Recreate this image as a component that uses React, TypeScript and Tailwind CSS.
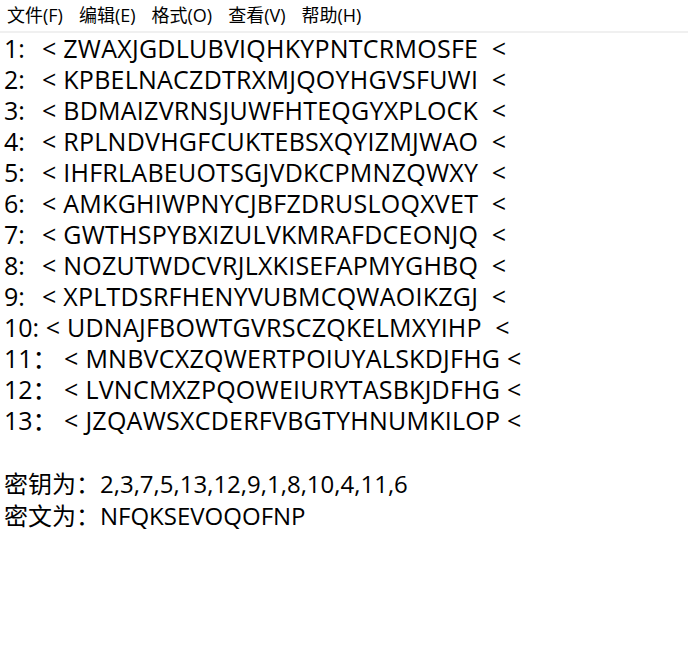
import React from 'react';

const menus = ['文件(F)', '编辑(E)', '格式(O)', '查看(V)', '帮助(H)'];

// [line prefix, rest of the line]
const rows: [string, string][] = [
  ['1:  ', '< ZWAXJGDLUBVIQHKYPNTCRMOSFE  <'],
  ['2:  ', '< KPBELNACZDTRXMJQOYHGVSFUWI  <'],
  ['3:  ', '< BDMAIZVRNSJUWFHTEQGYXPLOCK  <'],
  ['4:  ', '< RPLNDVHGFCUKTEBSXQYIZMJWAO  <'],
  ['5:  ', '< IHFRLABEUOTSGJVDKCPMNZQWXY  <'],
  ['6:  ', '< AMKGHIWPNYCJBFZDRUSLOQXVET  <'],
  ['7:  ', '< GWTHSPYBXIZULVKMRAFDCEONJQ  <'],
  ['8:  ', '< NOZUTWDCVRJLXKISEFAPMYGHBQ  <'],
  ['9:  ', '< XPLTDSRFHENYVUBMCQWAOIKZGJ  <'],
  ['10: ', '< UDNAJFBOWTGVRSCZQKELMXYIHP  <'],
  ['11： ', '< MNBVCXZQWERTPOIUYALSKDJFHG <'],
  ['12： ', '< LVNCMXZPQOWEIURYTASBKJDFHG <'],
  ['13： ', '< JZQAWSXCDERFVBGTYHNUMKILOP <'],
];

const font = { fontFamily: '"Open Sans", "Noto Sans CJK SC", sans-serif' };

export default function App() {
  return (
    <div className="w-[688px] h-[651px] bg-white text-black overflow-hidden" style={font}>
      {/* menu bar */}
      <div className="flex h-[33px] items-center gap-[16px] pl-[7px] pb-[1px] text-[18px] border-b-2 border-[#f0f0f0]">
        {menus.map(m => (
          <span key={m}>{m}</span>
        ))}
      </div>

      <div className="pl-[4px] text-[25px] whitespace-pre">
        {rows.map(([num, text]) => (
          <div key={num} className="h-[31px] leading-[31px]">
            <span className="inline-block min-w-[38px]">{num}</span>
            <span className="tracking-[0.25px]">{text}</span>
          </div>
        ))}
        <div className="h-[32px]" />
        <div className="h-[32px] leading-[32px] text-[24px]">密钥为：2,3,7,5,13,12,9,1,8,10,4,11,6</div>
        <div className="h-[32px] leading-[32px] text-[24px]">密文为：NFQKSEVOQOFNP</div>
      </div>
    </div>
  );
}
